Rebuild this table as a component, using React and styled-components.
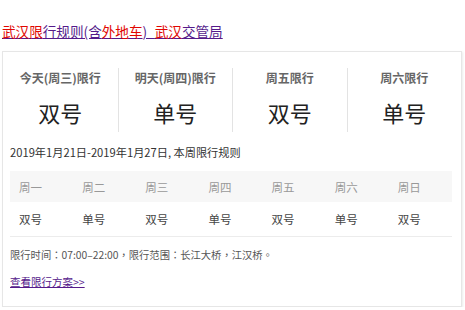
import React from 'react';
import styled, { createGlobalStyle } from 'styled-components';

const GlobalStyle = createGlobalStyle`
    body {
        margin: 0;
        padding: 0 2px;
        background: #fff;
        font-family: "Noto Sans CJK SC", "Liberation Sans", sans-serif;
    }
`;

const Title = styled.a`
    display: inline-block;
    margin-top: 22px;
    font-size: 13.6px;
    line-height: 18px;
    color: #551a8b;
    text-decoration: underline;
`;

const Hit = styled.span`
    color: #e10601;
`;

const Card = styled.div`
    margin-top: 9px;
    width: 458px;
    border: 1px solid #e6e6e6;
    box-shadow: 1px 1px 2px rgba(0, 0, 0, 0.08);
    padding-bottom: 16px;
`;

const Today = styled.div`
    display: grid;
    grid-template-columns: repeat(4, 1fr);
    padding-top: 16px;
`;

const DayCell = styled.div`
    display: flex;
    flex-direction: column;
    align-items: center;
    height: 64px;
    border-left: ${p => (p.first ? 'none' : '1px solid #e3e3e3')};
`;

const DayLabel = styled.div`
    font-size: 12px;
    line-height: 20px;
    font-weight: bold;
    color: #666;
`;

const DayValue = styled.div`
    margin-top: 10px;
    font-size: 22px;
    line-height: 28px;
    color: #222;
`;

const Range = styled.div`
    margin: 12px 0 0 7px;
    font-size: 11.2px;
    line-height: 16px;
    color: #333;
`;

const Week = styled.div`
    margin: 11px 9px 0 7px;
    border-bottom: 1px solid #ececec;
`;

const WeekRow = styled.div`
    display: grid;
    grid-template-columns: repeat(7, 1fr);
    height: ${p => (p.head ? '31px' : '34px')};
    align-items: center;
    background: ${p => (p.head ? '#f7f7f7' : '#fff')};
    color: ${p => (p.head ? '#999' : '#444')};
    font-size: 11.5px;
`;

const WeekCell = styled.div`
    padding-left: 9px;
`;

const Note = styled.div`
    margin: 10px 0 0 7px;
    font-family: "Noto Sans CJK TC", "Liberation Sans", sans-serif;
    font-size: 10.3px;
    line-height: 16px;
    color: #555;
`;

const More = styled.a`
    display: block;
    width: max-content;
    margin: 11px 0 0 7px;
    font-size: 10.5px;
    line-height: 16px;
    color: #551a8b;
    text-decoration: underline;
`;

const days = [
    { label: '今天(周三)限行', value: '双号' },
    { label: '明天(周四)限行', value: '单号' },
    { label: '周五限行', value: '双号' },
    { label: '周六限行', value: '单号' },
];

const week = [
    ['周一', '双号'],
    ['周二', '单号'],
    ['周三', '双号'],
    ['周四', '单号'],
    ['周五', '双号'],
    ['周六', '单号'],
    ['周日', '双号'],
];

export default function App() {
    return (
        <>
            <GlobalStyle />
            <Title href="#">
                <Hit>武汉限</Hit>行规则(含<Hit>外地车</Hit>)_<Hit>武汉</Hit>交管局
            </Title>
            <Card>
                <Today>
                    {days.map((d, i) => (
                        <DayCell key={i} first={i === 0}>
                            <DayLabel>{d.label}</DayLabel>
                            <DayValue>{d.value}</DayValue>
                        </DayCell>
                    ))}
                </Today>
                <Range>2019年1月21日-2019年1月27日, 本周限行规则</Range>
                <Week>
                    <WeekRow head>
                        {week.map(w => <WeekCell key={w[0]}>{w[0]}</WeekCell>)}
                    </WeekRow>
                    <WeekRow>
                        {week.map(w => <WeekCell key={w[0]}>{w[1]}</WeekCell>)}
                    </WeekRow>
                </Week>
                <Note>限行时间：07:00–22:00，限行范围：长江大桥，江汉桥。</Note>
                <More href="#">查看限行方案&gt;&gt;</More>
            </Card>
        </>
    );
}
